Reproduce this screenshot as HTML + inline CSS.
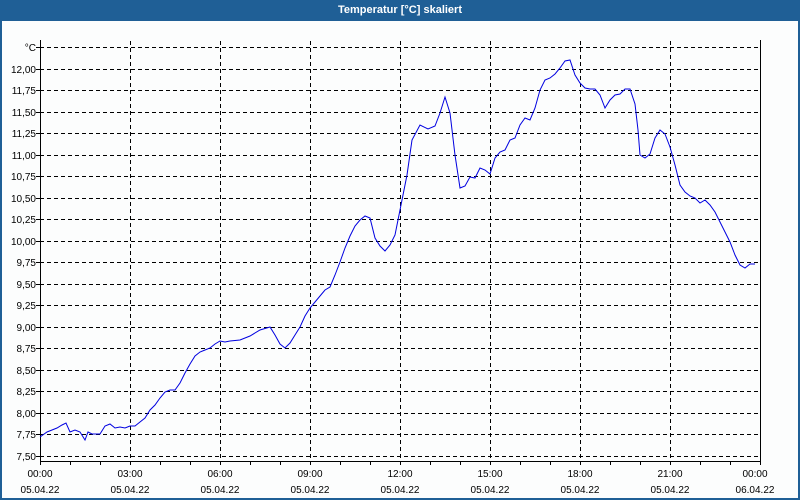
<!DOCTYPE html>
<html><head><meta charset="utf-8"><style>
html,body{margin:0;padding:0;width:800px;height:500px;overflow:hidden;background:#fff;font-family:"Liberation Sans",sans-serif}
</style></head><body>
<svg width="800" height="500" xmlns="http://www.w3.org/2000/svg" style="display:block">
<rect x="0" y="0" width="800" height="500" fill="#1f5f96"/>
<rect x="2" y="21" width="796" height="477" fill="#fcfdfd"/>
<text x="400" y="13" fill="#fff" font-size="11" font-weight="bold" text-anchor="middle">Temperatur [°C] skaliert</text>
<g stroke="#000" stroke-width="1" stroke-dasharray="4,3" fill="none" shape-rendering="crispEdges">
<line x1="40" y1="47.5" x2="760" y2="47.5"/>
<line x1="40" y1="69.5" x2="760" y2="69.5"/><line x1="40" y1="90.5" x2="760" y2="90.5"/><line x1="40" y1="112.5" x2="760" y2="112.5"/><line x1="40" y1="133.5" x2="760" y2="133.5"/><line x1="40" y1="155.5" x2="760" y2="155.5"/><line x1="40" y1="176.5" x2="760" y2="176.5"/><line x1="40" y1="198.5" x2="760" y2="198.5"/><line x1="40" y1="219.5" x2="760" y2="219.5"/><line x1="40" y1="241.5" x2="760" y2="241.5"/><line x1="40" y1="262.5" x2="760" y2="262.5"/><line x1="40" y1="284.5" x2="760" y2="284.5"/><line x1="40" y1="305.5" x2="760" y2="305.5"/><line x1="40" y1="327.5" x2="760" y2="327.5"/><line x1="40" y1="348.5" x2="760" y2="348.5"/><line x1="40" y1="370.5" x2="760" y2="370.5"/><line x1="40" y1="391.5" x2="760" y2="391.5"/><line x1="40" y1="413.5" x2="760" y2="413.5"/><line x1="40" y1="434.5" x2="760" y2="434.5"/><line x1="40" y1="456.5" x2="760" y2="456.5"/>
<line x1="130.5" y1="41" x2="130.5" y2="461"/><line x1="220.5" y1="41" x2="220.5" y2="461"/><line x1="310.5" y1="41" x2="310.5" y2="461"/><line x1="400.5" y1="41" x2="400.5" y2="461"/><line x1="490.5" y1="41" x2="490.5" y2="461"/><line x1="580.5" y1="41" x2="580.5" y2="461"/><line x1="670.5" y1="41" x2="670.5" y2="461"/>
</g>
<g stroke="#000" stroke-width="1" fill="none" shape-rendering="crispEdges">
<polyline points="40.5,40 40.5,461.5 760.5,461.5 760.5,40"/>
<path d="M36 47.5h4M36 69.5h4M36 90.5h4M36 112.5h4M36 133.5h4M36 155.5h4M36 176.5h4M36 198.5h4M36 219.5h4M36 241.5h4M36 262.5h4M36 284.5h4M36 305.5h4M36 327.5h4M36 348.5h4M36 370.5h4M36 391.5h4M36 413.5h4M36 434.5h4M36 456.5h4"/>
<path d="M40.5 461v4M70.5 461v4M100.5 461v4M130.5 461v4M160.5 461v4M190.5 461v4M220.5 461v4M250.5 461v4M280.5 461v4M310.5 461v4M340.5 461v4M370.5 461v4M400.5 461v4M430.5 461v4M460.5 461v4M490.5 461v4M520.5 461v4M550.5 461v4M580.5 461v4M610.5 461v4M640.5 461v4M670.5 461v4M700.5 461v4M730.5 461v4M760.5 461v4"/>
</g>
<g font-size="10" fill="#000" text-anchor="end">
<text x="36" y="51">°C</text>
<text x="36" y="73">12,00</text><text x="36" y="94">11,75</text><text x="36" y="116">11,50</text><text x="36" y="137">11,25</text><text x="36" y="159">11,00</text><text x="36" y="180">10,75</text><text x="36" y="202">10,50</text><text x="36" y="223">10,25</text><text x="36" y="245">10,00</text><text x="36" y="266">9,75</text><text x="36" y="288">9,50</text><text x="36" y="309">9,25</text><text x="36" y="331">9,00</text><text x="36" y="352">8,75</text><text x="36" y="374">8,50</text><text x="36" y="395">8,25</text><text x="36" y="417">8,00</text><text x="36" y="438">7,75</text><text x="36" y="460">7,50</text>
</g>
<g font-size="10" fill="#000" text-anchor="middle">
<text x="40" y="477">00:00</text><text x="130" y="477">03:00</text><text x="220" y="477">06:00</text><text x="310" y="477">09:00</text><text x="400" y="477">12:00</text><text x="490" y="477">15:00</text><text x="580" y="477">18:00</text><text x="670" y="477">21:00</text><text x="755" y="477">00:00</text>
<text x="40" y="493">05.04.22</text><text x="130" y="493">05.04.22</text><text x="220" y="493">05.04.22</text><text x="310" y="493">05.04.22</text><text x="400" y="493">05.04.22</text><text x="490" y="493">05.04.22</text><text x="580" y="493">05.04.22</text><text x="670" y="493">05.04.22</text><text x="755" y="493">06.04.22</text>
</g>
<polyline fill="none" stroke="#0000e0" stroke-width="1" points="40,437 47,432 52,430 57,428 62,425 66,423 70,432 75,430 80,432 85,440 88,432 92,434 96,434 100,434 105,426 110,424 115,428 120,427 125,428 130,426 135,426 140,422 145,418 150,410 155,405 160,398 165,392 170,390 175,390 180,383 185,373 190,364 195,356 200,352 205,350 210,348 215,344 220,341 225,342 230,341 240,340 250,336 260,330 270,327 275,335 280,344 285,348 290,343 295,335 300,327 305,316 310,308 315,302 320,296 325,290 330,287 335,275 340,262 345,248 350,236 355,226 360,220 365,216 370,218 375,238 380,246 385,251 390,245 395,235 400,210 407,175 412,140 420,125 428,129 435,126 440,113 445,97 450,113 455,155 460,188 465,186 470,177 475,178 480,168 485,170 490,174 495,158 500,152 505,150 510,140 515,138 520,125 525,118 530,120 535,108 540,90 545,80 550,78 555,74 560,68 565,61 570,60 575,75 580,83 585,88 590,89 595,89 600,95 605,108 610,100 615,95 620,94 625,89 630,89 635,104 638,130 640,155 645,158 650,154 655,138 660,130 665,134 670,147 675,165 680,185 685,192 690,196 695,198 700,203 705,200 710,205 715,212 720,222 725,232 730,242 735,255 740,265 745,268 750,264 755,264"/>
</svg>
</body></html>
